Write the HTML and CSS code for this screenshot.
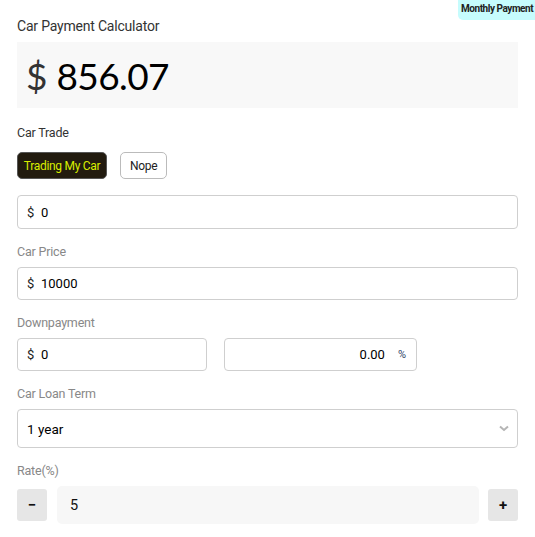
FILE: index.html
```html
<!DOCTYPE html>
<html>
<head>
<meta charset="utf-8">
<link rel="stylesheet" href="styles.css">
</head>
<body>
<div class="badge">Monthly Payment</div>
<div class="calc">
  <div class="title">Car Payment Calculator</div>
  <div class="result"><span class="cur">$</span> <span class="amount">856.07</span></div>

  <div class="label dark trade-label">Car Trade</div>
  <div class="toggle">
    <button class="btn active">Trading My Car</button>
    <button class="btn">Nope</button>
  </div>
  <div class="input first"><span class="pre">$</span><span class="val">0</span></div>

  <div class="field">
    <div class="label">Car Price</div>
    <div class="input"><span class="pre">$</span><span class="val">10000</span></div>
  </div>

  <div class="field">
    <div class="label">Downpayment</div>
    <div class="pair">
      <div class="input half"><span class="pre">$</span><span class="val">0</span></div>
      <div class="input half right"><span class="val">0.00</span><span class="pct">%</span></div>
    </div>
  </div>

  <div class="field">
    <div class="label">Car Loan Term</div>
    <div class="select"><span class="val">1 year</span>
      <svg class="chev" width="10" height="7" viewBox="0 0 10 7"><path d="M1 1.5 L5 5 L9 1.5" fill="none" stroke="#b5b5b5" stroke-width="2"/></svg>
    </div>
  </div>

  <div class="field">
    <div class="label">Rate(%)</div>
    <div class="rate">
      <div class="step">&minus;</div>
      <div class="rate-input">5</div>
      <div class="step">+</div>
    </div>
  </div>
</div>
</body>
</html>
```
FILE: styles.css
```css
html, body { margin: 0; padding: 0; overflow: hidden; }
body {
  font-family: "Roboto", "Liberation Sans", sans-serif;
  background: #fff;
  color: #222;
  width: 535px;
  height: 537px;
  position: relative;
}
.badge {
  position: absolute;
  top: 0;
  left: 458px;
  width: 77px;
  height: 20px;
  line-height: 17px;
  padding-left: 3px;
  background: #c6fcfd;
  border-bottom-left-radius: 5px;
  font-size: 10px;
  font-weight: 700;
  color: #222;
  letter-spacing: -0.45px;
  white-space: nowrap;
  box-sizing: border-box;
}
.calc {
  padding: 18px 17px 0 17px;
  width: 501px;
}
.title {
  font-size: 14px;
  line-height: 16px;
  color: #333;
  letter-spacing: -0.2px;
}
.result {
  margin-top: 8px;
  height: 66px;
  background: #f8f8f8;
  display: flex;
  align-items: center;
  padding-left: 9px;
  font-family: "Lato", sans-serif;
  font-size: 37px;
  color: #000;
  gap: 9px;
}
.result .cur { color: #333; font-weight: 400; }
.result .amount { font-weight: 400; letter-spacing: -0.6px; }
.label {
  font-size: 12.5px;
  line-height: 16px;
  height: 16px;
  color: #888;
  margin-bottom: 7px;
  letter-spacing: -0.2px;
}
.label.dark { color: #333; }
.trade-label { margin-top: 17px; margin-bottom: 11px; }
.toggle { display: flex; gap: 13px; }
.btn {
  font-family: inherit;
  font-size: 12px;
  height: 27px;
  border-radius: 5px;
  border: 1px solid #bbb;
  background: #fff;
  color: #222;
  padding: 0 9px;
  letter-spacing: -0.3px;
  white-space: nowrap;
}
.btn.active {
  background: #221b0f;
  border-color: #555;
  color: #d9ee00;
  width: 90px;
  padding: 0;
}
.input {
  height: 33px;
  border: 1px solid #cfcfcf;
  border-radius: 4px;
  box-sizing: border-box;
  display: flex;
  align-items: center;
  padding-left: 9px;
  font-size: 13px;
  color: #111;
}
.input.first { margin-top: 16px; height: 34px; }
.pre { width: 14px; color: #222; }
.val { font-weight: 400; color: #000; }
.field { margin-top: 15px; }
.pair { display: flex; gap: 17px; }
.input.half { width: 190px; }
.input.right { width: 193px; justify-content: flex-end; padding-right: 10px; }
.pct { margin-left: 13px; font-size: 11px; color: #2f3f66; }
.select {
  height: 39px;
  border: 1px solid #cfcfcf;
  border-radius: 4px;
  box-sizing: border-box;
  display: flex;
  align-items: center;
  justify-content: space-between;
  padding: 0 8px 0 9px;
  font-size: 13.5px;
  color: #111;
}
.rate { display: flex; align-items: center; }
.step {
  width: 30px;
  height: 32px;
  background: #e6e6e6;
  border-radius: 3px;
  display: flex;
  align-items: center;
  justify-content: center;
  font-size: 15px;
  font-weight: 700;
  color: #111;
}
.rate-input {
  flex: 1;
  height: 38px;
  margin: 0 9px 0 10px;
  background: #f7f7f7;
  border-radius: 5px;
  display: flex;
  align-items: center;
  padding-left: 13px;
  font-size: 14.5px;
  color: #111;
}
```
